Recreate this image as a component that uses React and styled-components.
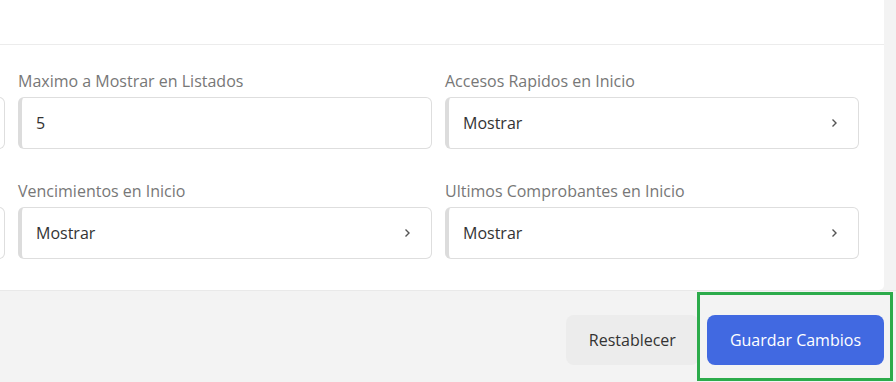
import React from 'react'
import styled, { createGlobalStyle } from 'styled-components'

const GlobalStyle = createGlobalStyle`
    body {
        margin: 0;
        background: #f3f3f3;
        font-family: "Open Sans", "Noto Sans", sans-serif;
    }
`

const Page = styled('div')`
    width: 896px;
    height: 382px;
    display: flex;
    flex-direction: column;
    overflow: hidden;
    background: #f3f3f3;
`

const Panel = styled('div')`
    width: 884px;
    background: #fff;
    border-bottom-right-radius: 5px;
    overflow: hidden;
`

const TopBar = styled('div')`
    height: 44px;
    border-bottom: 1px solid #ececec;
`

const FormArea = styled('div')`
    padding: 26px 0 31px 0;
    overflow: hidden;
`

const Grid = styled('div')`
    display: grid;
    grid-template-columns: repeat(3, 414px);
    column-gap: 13px;
    row-gap: 32px;
    margin-left: -409px;
`

const Field = styled('div')`
    display: flex;
    flex-direction: column;
    gap: 5px;
`

const Label = styled('label')`
    font-size: 16px;
    line-height: 21px;
    height: 21px;
    color: #777;
`

const InputBox = styled('div')`
    height: 52px;
    box-sizing: border-box;
    display: flex;
    align-items: center;
    justify-content: space-between;
    padding: 0 20px 0 14px;
    border: 1px solid #dedede;
    border-left: 4px solid #dcdcdc;
    border-radius: 6px;
    font-size: 16px;
    color: #333;
    background: #fff;
`

const Chevron = () => (
    <svg width="8" height="12" viewBox="0 0 8 12">
        <polyline points="2.5,2.5 6,6 2.5,9.5" fill="none" stroke="#555" strokeWidth="1.4" />
    </svg>
)

const Footer = styled('div')`
    flex: 1;
    border-top: 1px solid #e9e9e9;
    display: flex;
    justify-content: flex-end;
    align-items: flex-start;
    gap: 8px;
    padding: 24px 12px 0 0;
    position: relative;
`

const Button = styled('button')`
    height: 50px;
    padding: 0 23px;
    border: none;
    border-radius: 8px;
    font-family: inherit;
    font-size: 16px;
    background: ${p => (p.primary ? '#4169e1' : '#ececec')};
    color: ${p => (p.primary ? '#fff' : '#333')};
`

const Highlight = styled('div')`
    position: absolute;
    left: 697px;
    top: 1px;
    width: 196px;
    height: 89px;
    box-sizing: border-box;
    border: 3px solid #2cab4b;
    pointer-events: none;
`

const fields = [
    { label: '', value: '' },
    { label: 'Maximo a Mostrar en Listados', value: '5' },
    { label: 'Accesos Rapidos en Inicio', value: 'Mostrar', select: true },
    { label: '', value: '', select: true },
    { label: 'Vencimientos en Inicio', value: 'Mostrar', select: true },
    { label: 'Ultimos Comprobantes en Inicio', value: 'Mostrar', select: true },
]

export default function App () {
    return (
        <>
        <GlobalStyle />
        <Page>
            <Panel>
                <TopBar />
                <FormArea>
                    <Grid>
                        {fields.map((f, i) => (
                            <Field key={i}>
                                <Label>{f.label}</Label>
                                <InputBox>
                                    <span>{f.value}</span>
                                    {f.select && <Chevron />}
                                </InputBox>
                            </Field>
                        ))}
                    </Grid>
                </FormArea>
            </Panel>
            <Footer>
                <Button>Restablecer</Button>
                <Button primary>Guardar Cambios</Button>
                <Highlight />
            </Footer>
        </Page>
        </>
    )
}
